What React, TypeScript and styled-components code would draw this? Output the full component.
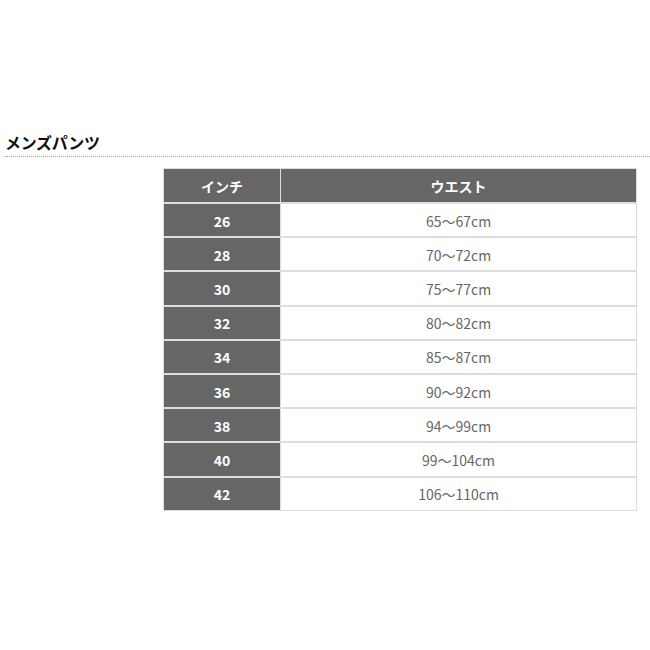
import React from "react";
import styled, { createGlobalStyle } from "styled-components";

const Global = createGlobalStyle`
  html, body { margin: 0; padding: 0; background: #fff; }
  body { font-family: "Noto Sans CJK JP", "Noto Sans", sans-serif; }
`;

const Page = styled.div`
  width: 650px;
  height: 650px;
  padding-top: 129px;
  box-sizing: border-box;
`;

const Title = styled.h2`
  margin: 0 0 0 5px;
  font-size: 16px;
  font-weight: 700;
  color: #111;
  line-height: 26px;
  letter-spacing: -0.3px;
  padding-bottom: 1px;
  border-bottom: 1px dotted #999;
`;

const Table = styled.table`
  margin: 11px 0 0 163px;
  width: 474px;
  border-collapse: collapse;
  border: 1px solid #ddd;
  table-layout: fixed;
`;

const HeadCell = styled.th<{ $w?: number }>`
  background: #666;
  color: #fff;
  font-size: 14px;
  line-height: 18px;
  font-weight: 700;
  height: 33px;
  padding: 0;
  border: 1px solid #ddd;
  text-align: center;
  width: ${(p) => (p.$w ? `${p.$w}px` : "auto")};
`;

const KeyCell = styled.td`
  background: #666;
  color: #fff;
  font-size: 14px;
  line-height: 18px;
  font-weight: 700;
  height: 31.2px;
  padding: 1px 0 0;
  border: 1px solid #ddd;
  border-top-width: 2px;
  text-align: center;
`;

const ValueCell = styled.td`
  background: #fff;
  color: #666;
  font-size: 14px;
  line-height: 18px;
  height: 31.2px;
  padding: 1px 0 0;
  border: 1px solid #ddd;
  border-top-width: 2px;
  text-align: center;
`;

const rows: [string, string][] = [
  ["26", "65〜67cm"],
  ["28", "70〜72cm"],
  ["30", "75〜77cm"],
  ["32", "80〜82cm"],
  ["34", "85〜87cm"],
  ["36", "90〜92cm"],
  ["38", "94〜99cm"],
  ["40", "99〜104cm"],
  ["42", "106〜110cm"],
];

export default function App() {
  return (
    <Page>
      <Global />
      <Title>メンズパンツ</Title>
      <Table>
        <thead>
          <tr>
            <HeadCell $w={116}>インチ</HeadCell>
            <HeadCell>ウエスト</HeadCell>
          </tr>
        </thead>
        <tbody>
          {rows.map(([k, v]) => (
            <tr key={k}>
              <KeyCell>{k}</KeyCell>
              <ValueCell>{v}</ValueCell>
            </tr>
          ))}
        </tbody>
      </Table>
    </Page>
  );
}
